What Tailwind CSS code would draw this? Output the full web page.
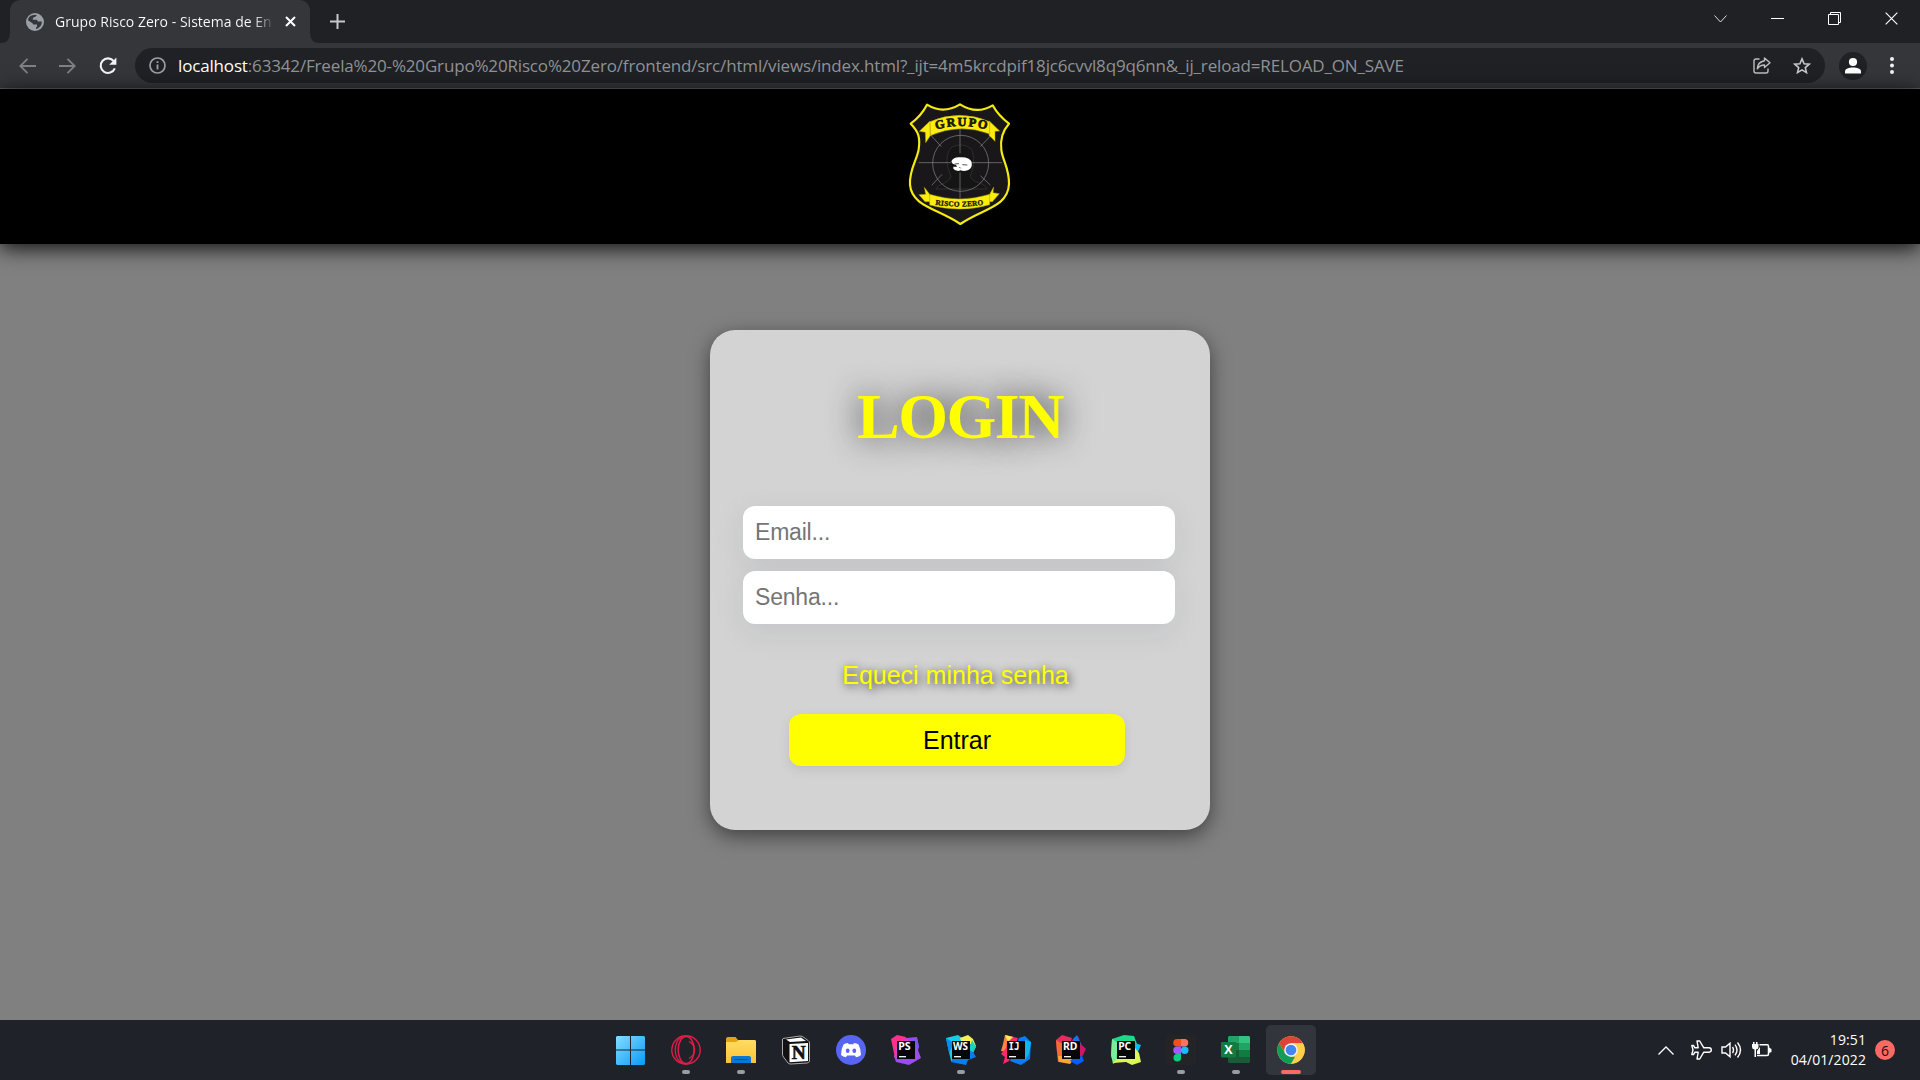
<!DOCTYPE html>
<html lang="pt-BR">
<head>
<meta charset="utf-8">
<title>Grupo Risco Zero</title>
<script src="https://cdn.jsdelivr.net/npm/@tailwindcss/browser@4"></script>
</head>
<body class="w-[1920px] h-[1080px] overflow-hidden flex flex-col bg-[#808080] font-['Open_Sans',sans-serif]">

<!-- Browser tab strip -->
<div class="h-[43px] shrink-0 bg-[#202124] flex items-start">
  <svg class="w-[10px] h-[43px] shrink-0" viewBox="0 0 10 43"><path d="M0 43Q10 43 10 33V43Z" fill="#35363a"/></svg>
  <div class="w-[300px] h-[43px] rounded-t-[10px] bg-[#35363a] flex items-center pl-4">
    <svg class="w-[18px] h-[18px] shrink-0" viewBox="0 0 18 18"><circle cx="9" cy="9" r="9" fill="#9aa0a6"/><path d="M2 7.2C2 4.500 4 2.600 6.500 2.200L9 1.800 11 2.500C10 3.200 9.500 4 8 4.300 7 4.600 7.300 5.800 6.500 6.500H10.500C11.500 6.500 11 8 12 8.500H15.800C16 12 13.500 15 10.500 15.900 9.500 15.400 10 14.300 11 13.500V11.500H7.200C5.800 11.200 6 9.500 4.500 9.300Z" fill="#35363a"/><path d="M2.500 8L6.500 10.200 8 13.500 7.500 16 4.500 14.500Z M8 4.500L12 3.500 13.800 4.800 12 7 10.500 6.500H7Z" fill="#9aa0a6"/></svg>
    <div class="w-[220px] ml-[11px] overflow-hidden whitespace-nowrap text-[14px] leading-5 tracking-[0.02px] text-white bg-gradient-to-r from-white from-90% to-transparent bg-clip-text [-webkit-text-fill-color:transparent]">Grupo Risco Zero - Sistema de En</div>
    <svg class="w-[11px] h-[11px] ml-[10px] shrink-0" viewBox="0 0 11 11" fill="none" stroke="#fff" stroke-width="2"><path d="M1 1L10 10M10 1L1 10"/></svg>
  </div>
  <svg class="w-[10px] h-[43px] shrink-0" viewBox="0 0 10 43"><path d="M10 43Q0 43 0 33V43Z" fill="#35363a"/></svg>
  <svg class="w-[15px] h-[15px] mt-[14px] ml-[10px]" viewBox="0 0 15 15" stroke="#c6c8cb" stroke-width="2"><path d="M7.500 0V15M0 7.500H15"/></svg>
  <div class="ml-auto flex items-center h-[37px] pr-[22px] gap-[44px]">
    <svg class="w-[13px] h-[8px]" viewBox="0 0 13 8" fill="none" stroke="#ddd"><path d="M.5 .5L6.500 7 12.500 .5"/></svg>
    <svg class="w-[13px] h-[13px]" viewBox="0 0 13 13" stroke="#fff"><path d="M0 6.500H13"/></svg>
    <svg class="w-[13px] h-[13px]" viewBox="0 0 13 13" fill="none" stroke="#fff"><path d="M.5 2.500H10.500V12.500H.5ZM2.500 2.500V.5H12.500V10.500H10.500"/></svg>
    <svg class="w-[13px] h-[13px]" viewBox="0 0 14 14" stroke="#fff" stroke-width="1.200"><path d="M.7 .7L13.300 13.300M13.300 .7L.7 13.300"/></svg>
  </div>
</div>

<!-- Address toolbar -->
<div class="h-[46px] shrink-0 bg-[#35363a] border-b border-[#5c5d60] flex items-center pl-[19px] pr-[26px]">
  <svg class="w-[17px] h-[16px]" viewBox="0 0 17 16" fill="none" stroke="#808184" stroke-width="1.800"><path d="M17 8H1.500M8.500 .8L1.300 8 8.500 15.200"/></svg>
  <svg class="w-[17px] h-[16px] ml-[23px]" viewBox="0 0 17 16" fill="none" stroke="#808184" stroke-width="1.800"><path d="M0 8H15.500M8.500 .8L15.700 8 8.500 15.200"/></svg>
  <svg class="w-[18px] h-[18px] ml-[23px]" viewBox="0 0 18 18"><path d="M14.800 4.200A7.300 7.300 0 1 0 15.800 11.300" fill="none" stroke="#f1f3f4" stroke-width="2.100"/><path d="M17.400 .5V7.700H10.200Z" fill="#f1f3f4"/></svg>
  <div class="w-[1690px] h-[35px] ml-[18px] rounded-full bg-[#202124] flex items-center pl-[14px] pr-[14px]">
    <svg class="w-[17px] h-[17px] shrink-0" viewBox="0 0 17 17"><circle cx="8.500" cy="8.500" r="7.500" fill="none" stroke="#9aa0a6" stroke-width="1.700"/><path d="M8.500 7.500V12.500M8.500 4.300V6.100" stroke="#9aa0a6" stroke-width="1.800"/></svg>
    <div class="ml-[12px] whitespace-nowrap text-[17px] leading-6 tracking-[-0.16px] text-[#909396]"><span class="text-white">localhost</span>:63342/Freela%20-%20Grupo%20Risco%20Zero/frontend/src/html/views/index.html?_ijt=4m5krcdpif18jc6cvvl8q9q6nn&amp;_ij_reload=RELOAD_ON_SAVE</div>
    <svg class="w-[18px] h-[17px] ml-auto" viewBox="0 0 18 17" fill="none" stroke="#bdbfc1" stroke-width="1.400"><path d="M6.500 2H3Q1 2 1 4V14Q1 16 3 16H13Q15 16 15 14V11.500"/><path d="M11.500 1L17 5.800 11.500 10.500V8C8 8 6 9.200 4.300 11.800 4.500 7 7.500 4.500 11.500 3.800Z" stroke-linejoin="round"/></svg>
    <svg class="w-[18px] h-[17px] ml-[22px]" viewBox="0 0 18 17" fill="none" stroke="#c6c8cb" stroke-width="1.600"><path d="M9 1.900L11.100 6.700 16.200 7.200 12.300 10.600 13.500 15.600 9 12.900 4.500 15.600 5.700 10.600 1.800 7.200 6.900 6.700Z"/></svg>
  </div>
  <svg class="w-[28px] h-[28px] ml-auto" viewBox="0 0 28 28"><circle cx="14" cy="14" r="14" fill="#202124"/><circle cx="14" cy="10" r="4.100" fill="#fff"/><path d="M6 21.500V19.500C6 16.500 10 15.500 14 15.500S22 16.500 22 19.500V21.500Z" fill="#fff"/></svg>
  <svg class="w-[4px] h-[17px] ml-[23px]" viewBox="0 0 4 17" fill="#f1f3f4"><circle cx="2" cy="2" r="2"/><circle cx="2" cy="8.500" r="2"/><circle cx="2" cy="15" r="2"/></svg>
</div>

<!-- Page header -->
<header class="h-[155px] shrink-0 bg-black flex justify-center items-start pt-[11px] shadow-[0_4px_20px_rgba(0,0,0,0.9)]">
  <svg class="w-[110px] h-[127px]" viewBox="45 30 330 381">
    <defs>
      <path id="arc-top" d="M138 119Q214 97 294 119"/>
      <path id="arc-bottom" d="M136 344Q210 355 284 344"/>
    </defs>
    <path d="M111 44Q159 74 210 43Q260 75 308 46Q325 77 357 101Q328 133 334 180C338 212 358 235 357 282C354 352 277 356 211 402C145 356 65 350 60 284C57 239 81 210 86 178C91 143 86 125 62 101Q94 77 111 44Z" fill="#191719" stroke="#f5eb13" stroke-width="6.500" stroke-linejoin="round"/>
    <path d="M183 260C170 228 168 208 175 188C180 157 243 158 248 188C254 219 250 231 241 259C247 280 283 276 291 297H138C148 278 173 283 183 260Z" fill="#151515" stroke="#343234" stroke-width="2.500"/>
    <g fill="none" stroke="#8b898b" stroke-width="2"><circle cx="212" cy="220" r="84"/><path d="M210 112V190M210 247V326M86 218H184M246 218H336M122 135L154 170M302 137L271 170M125 286L156 253M301 285L271 257"/></g>
    <path d="M184 214Q191 200 211 202Q239 201 245 216Q248 235 235 240Q221 246 212 241L205 243 196 241 190 236 190 230 201 230 198 225 188 221Z" fill="#fff"/>
    <path d="M194 222L207 221M217 224L232 225M208 231L212 235" stroke="#333" stroke-width="2.500" fill="none"/>
    <g fill="#fced0c" stroke="#a99f0b" stroke-width="1.500"><path d="M120 93L121 137 107 158 106 127 88 124ZM298 93L297 136 315 154 315 124 329 123Z"/><path d="M120 95Q208 57 299 95V132Q209 98 121 137Z"/><path d="M119 313L103 292 107 313 87 314 105 335H126ZM299 313L311 291 309 308 328 311 307 335H287Z"/><path d="M119 313Q208 341 299 313V344Q209 370 119 345Z"/></g>
    <text class="font-['Liberation_Serif',serif] font-bold" font-size="37" fill="#171500" stroke="#171500" stroke-width="2"><textPath href="#arc-top" textLength="154">GRUPO</textPath></text>
    <text class="font-['Liberation_Serif',serif] font-bold" font-size="22" fill="#171500" stroke="#171500"><textPath href="#arc-bottom" textLength="145">RISCO ZERO</textPath></text>
  </svg>
</header>

<!-- Login -->
<main class="flex-1 flex justify-center items-start pt-[86px]">
  <section class="w-[500px] h-[500px] rounded-[25px] bg-[#d3d3d3] shadow-[0_6px_20px_rgba(0,0,0,0.5)] flex flex-col font-['Liberation_Sans',sans-serif]">
    <h1 class="mt-[50px] h-[74px] text-center font-['Liberation_Serif',serif] font-bold text-[64px] leading-[74px] tracking-[-1.5px] text-[#ffff00] [text-shadow:0_0_32px_rgba(0,0,0,0.85)]">LOGIN</h1>
    <form class="mt-[52px] ml-[33px] w-[432px] flex flex-col gap-[12px]">
      <input type="text" placeholder="Email..." class="h-[53px] rounded-[12px] bg-white px-3 text-[23px] tracking-[-0.2px] placeholder:text-[#757575] shadow-[0_8px_32px_rgba(31,38,60,0.08)]">
      <input type="text" placeholder="Senha..." class="h-[53px] rounded-[12px] bg-white px-3 text-[23px] tracking-[-0.2px] placeholder:text-[#757575] shadow-[0_8px_32px_rgba(31,38,60,0.08)]">
    </form>
    <a class="mt-[36px] h-[30px] pr-[9px] text-center text-[25px] leading-[30px] text-[#ffff00] [text-shadow:2px_2px_10px_rgba(0,0,0,0.8)]">Equeci minha senha</a>
    <button class="mt-[24px] ml-[79px] w-[336px] h-[52px] pt-[2px] rounded-[12px] bg-[#ffff00] text-black text-[25px] shadow-[0_4px_12px_rgba(0,0,0,0.09)]">Entrar</button>
  </section>
</main>

<!-- Taskbar -->
<footer class="h-[60px] shrink-0 bg-[#1f2329] flex">
  <div class="w-[603.5px]"></div>
  <nav class="grid grid-cols-13 w-[715px] h-[60px]">
    <div class="flex flex-col items-center pt-[15px] gap-[5px]"><svg class="w-[30px] h-[30px]" viewBox="0 0 30 30"><defs><linearGradient id="win" x1="0" y1="0" x2="30" y2="30" gradientUnits="userSpaceOnUse"><stop stop-color="#86dfff"/><stop offset="1" stop-color="#0798f8"/></linearGradient></defs><path d="M1 1H14V14.400H0V2ZM15 1H28L29 2V14.400H15ZM0 15.500H14V30H1L0 29ZM15 15.500H29V29L28 30H15Z" fill="url(#win)"/></svg></div>
    <div class="flex flex-col items-center pt-[15px] gap-[5px]"><svg class="w-[30px] h-[30px]" viewBox="0 0 30 30" fill="none" stroke="#e21c48"><circle cx="15" cy="15" r="14.200" stroke-width="1.400"/><ellipse cx="15.200" cy="15" rx="8" ry="13.500" stroke-width="1.500"/><path d="M11 2C2 7 2 23 11 28M18 6.500C25 10 25 20 18 23.500" stroke-width="1.300"/></svg><i class="w-[8px] h-[4px] rounded-full bg-[#9a9ca0]"></i></div>
    <div class="flex flex-col items-center pt-[15px] gap-[5px]"><svg class="w-[30px] h-[30px]" viewBox="0 0 30 30"><defs><linearGradient id="fol" x1="0" y1="0" x2="0" y2="1"><stop stop-color="#ffdc63"/><stop offset="1" stop-color="#fdc332"/></linearGradient></defs><path d="M0 4Q0 2 2 2H9.500L12 5H28Q30 5 30 7V14H0Z" fill="#e5a313"/><path d="M0 7H10L13 5H28.500Q30 5 30 6.500V28H0Z" fill="url(#fol)"/><path d="M5 28V23Q5 21 7 21H23Q25 21 25 23V28Z" fill="#0878d2"/><path d="M9 24.500H21" stroke="#074f91" stroke-linecap="round"/></svg><i class="w-[8px] h-[4px] rounded-full bg-[#9a9ca0]"></i></div>
    <div class="flex flex-col items-center pt-[15px] gap-[5px]"><svg class="w-[30px] h-[30px]" viewBox="0 0 30 30"><path d="M2 3.500L19 1Q21 1 23 2.500L27 5.500Q28.500 6.500 28.500 8V26Q28 28 26 28L10 29Q8 29 7 28L2.500 22Q1.500 20.500 1.500 19V4Z" fill="#111" stroke="#aaa"/><path d="M5 4.500L20 2.500 25 6 9 7Z" fill="#fff"/><path d="M8.500 9L27 8V26L8.500 27.300Z" fill="#fff"/><text x="10.800" y="24" class="font-['Liberation_Serif',serif] font-bold" font-size="18.500" fill="#111" stroke="#111" stroke-width=".6" textLength="14" lengthAdjust="spacingAndGlyphs">N</text></svg></div>
    <div class="flex flex-col items-center pt-[15px] gap-[5px]"><svg class="w-[30px] h-[30px]" viewBox="0 0 30 30"><circle cx="15" cy="15" r="15" fill="#5865f2"/><path d="M12 8Q9 8.300 7.500 9.500Q5 14 5 20Q7 22 10 22.200L11 20.500H19L20 22.200Q23 22 25 20Q25 14 22.500 9.500Q21 8.300 18 8L17.300 9.300H12.700Z" fill="#fff"/><ellipse cx="11.700" cy="15.800" rx="1.900" ry="2.200" fill="#5865f2"/><ellipse cx="18.300" cy="15.800" rx="1.900" ry="2.200" fill="#5865f2"/></svg></div>
    <div class="flex flex-col items-center pt-[15px] gap-[5px]"><svg class="w-[30px] h-[30px]" viewBox="0 0 30 30"><path d="M0 4L6 0 15 2 12 20 4 23Z" fill="#ff318c"/><path d="M15 3L26 2 28 12 27 15 30 23 18 30 5 27 3 21 13 8Z" fill="#9b4bee"/><path d="M15 3L20 6 8 24 3 22 6 11Z" fill="#d63fc4"/><path d="M20 6L26 3 28 12 22 16Z" fill="#7656f5"/><rect x="6" y="6" width="18" height="18" fill="#08050c"/><text x="7.200" y="15" class="font-['Noto_Sans',sans-serif] font-bold" font-size="10" fill="#fff" textLength="12.500" lengthAdjust="spacingAndGlyphs">PS</text><path d="M8 21.700H15" stroke="#fff" stroke-width="1.300"/></svg></div>
    <div class="flex flex-col items-center pt-[15px] gap-[5px]"><svg class="w-[30px] h-[30px]" viewBox="0 0 30 30"><path d="M0 3L12 0 20 6 9 27 5 26Z" fill="#14cfe5"/><path d="M14 3L22 0 27 4 30 11 27 18 20 18Z" fill="#f4f05a"/><path d="M24 9L30 11 27 17 30 22 22 25 20 30 5 27 8 20Z" fill="#087cf3"/><path d="M26 5L30 12 27 17 23 15Z" fill="#14d5bc"/><path d="M0 3L8 8 3 18Z" fill="#078cf1"/><rect x="6" y="6" width="18" height="18" fill="#05080a"/><text x="7" y="15" class="font-['Noto_Sans',sans-serif] font-bold" font-size="10" fill="#fff" textLength="15" lengthAdjust="spacingAndGlyphs">WS</text><path d="M8 21.700H15" stroke="#fff" stroke-width="1.300"/></svg><i class="w-[8px] h-[4px] rounded-full bg-[#9a9ca0]"></i></div>
    <div class="flex flex-col items-center pt-[15px] gap-[5px]"><svg class="w-[30px] h-[30px]" viewBox="0 0 30 30"><path d="M4 0L13 2 9 18 0 16 2 9Z" fill="#ff873b"/><path d="M7 1L17 3 8 26 2 29 4 22 0 19 5 13Z" fill="#ff286c"/><path d="M18 3L24 1 30 7 29 24 20 30 9 26Z" fill="#087df5"/><path d="M24 5L30 7 28 19 24 25Z" fill="#12b5eb"/><path d="M4 0L12 2 7 7Z" fill="#f9ed60"/><rect x="6" y="6" width="18" height="18" fill="#090507"/><text x="7.500" y="15" class="font-['DejaVu_Sans_Mono',monospace] font-bold" font-size="9.600" fill="#fff" textLength="11" lengthAdjust="spacingAndGlyphs">IJ</text><path d="M8 21.700H15" stroke="#fff" stroke-width="1.300"/></svg></div>
    <div class="flex flex-col items-center pt-[15px] gap-[5px]"><svg class="w-[30px] h-[30px]" viewBox="0 0 30 30"><path d="M0 5L6 0 16 3 10 20 1 18Z" fill="#e52b60"/><path d="M0 5L7 9 8 25 2 27 1 17Z" fill="#f66b32"/><path d="M16 5L22 1 25 9 30 14 26 22 20 19Z" fill="#ca1767"/><path d="M17 4L21 0 25 9 20 11Z" fill="#0879f4"/><path d="M2 21L9 21 18 24 14 29 3 27Z" fill="#ffa436"/><path d="M17 23L26 21 28 26 21 30 14 26Z" fill="#075eff"/><rect x="6" y="6" width="18" height="18" fill="#090507"/><text x="7" y="15" class="font-['Noto_Sans',sans-serif] font-bold" font-size="10" fill="#fff" textLength="14.500" lengthAdjust="spacingAndGlyphs">RD</text><path d="M8 21.700H15" stroke="#fff" stroke-width="1.300"/></svg></div>
    <div class="flex flex-col items-center pt-[15px] gap-[5px]"><svg class="w-[30px] h-[30px]" viewBox="0 0 30 30"><path d="M1 4L13 0 23 1 26 9 10 25 3 28 0 21Z" fill="#21d789"/><path d="M1 4L7 8 5 27 2 29 0 20Z" fill="#78f099"/><path d="M24 8L30 10 27 17 22 17Z" fill="#08bdf0"/><path d="M24 13L28 18 30 27 21 30 15 27 2 28 9 20Z" fill="#dcf657"/><rect x="6" y="6" width="18" height="18" fill="#050905"/><text x="7.200" y="15" class="font-['Noto_Sans',sans-serif] font-bold" font-size="10" fill="#fff" textLength="13" lengthAdjust="spacingAndGlyphs">PC</text><path d="M8 21.700H15" stroke="#fff" stroke-width="1.300"/></svg></div>
    <div class="flex flex-col items-center pt-[15px] gap-[5px]"><svg class="w-[30px] h-[30px]" viewBox="0 0 30 30"><rect width="30" height="30" fill="#242426"/><path d="M15 4H11A3.750 3.750 0 0 0 11 11.500H15Z" fill="#f24e1e"/><path d="M15 4H18.500A3.750 3.750 0 0 1 18.500 11.500H15Z" fill="#ff7262"/><path d="M15 11.500H11A3.750 3.750 0 0 0 11 19H15Z" fill="#a259ff"/><circle cx="18.700" cy="15.250" r="3.750" fill="#1abcfe"/><path d="M15 19H11.200A3.750 3.750 0 1 0 15 22.700Z" fill="#0acf83"/></svg><i class="w-[8px] h-[4px] rounded-full bg-[#9a9ca0]"></i></div>
    <div class="flex flex-col items-center pt-[15px] gap-[5px]"><svg class="w-[30px] h-[30px]" viewBox="0 0 30 30"><path d="M8 1H18V8H7V2Z" fill="#21a366"/><path d="M18 1H28L29 2V8H18Z" fill="#33c481"/><path d="M7 8H18V15H7Z" fill="#107c41"/><path d="M18 8H29V15H18Z" fill="#21a366"/><path d="M7 15H18V22H7Z" fill="#185c37"/><path d="M18 15H29V22H18Z" fill="#107c41"/><path d="M7 22H29V27L28 28H8L7 27Z" fill="#185c37"/><rect y="7" width="15" height="15.500" rx="1" fill="#107c41"/><text x="7.500" y="19" text-anchor="middle" class="font-['Open_Sans',sans-serif] font-bold" font-size="12.500" fill="#fff">X</text></svg><i class="w-[8px] h-[4px] rounded-full bg-[#9a9ca0]"></i></div>
    <div class="w-[50px] h-[50px] mt-[5px] ml-[2.5px] rounded-[5px] bg-[#32353b] flex flex-col items-center pt-[10px] gap-[5px]"><svg class="w-[30px] h-[30px]" viewBox="0 0 30 30"><circle cx="15" cy="15" r="13.700" fill="#ffcf48"/><path d="M3.130 8.150A13.700 13.700 0 0 1 26.870 8.150H15L9.070 18.430Z" fill="#db4437"/><path d="M3.130 8.150L9.070 18.430 15 21.850H20.930L15 28.700A13.700 13.700 0 0 1 3.130 8.150Z" fill="#0f9d58"/><path d="M20.930 18.430L15 28.700A13.700 13.700 0 0 0 26.870 8.150H15Z" fill="#ffcf48"/><circle cx="15" cy="15" r="6.850" fill="#f1f1f1"/><circle cx="15" cy="15" r="5.300" fill="#4285f4"/></svg><i class="w-[20px] h-[4px] rounded-full bg-[#fa6a65]"></i></div>
  </nav>
  <div class="flex-1 flex items-center pr-[25px] justify-end text-white">
    <svg class="w-[16px] h-[9px]" viewBox="0 0 16 9" fill="none" stroke="#fff" stroke-width="1.300"><path d="M.5 8.500L8 1 15.500 8.500"/></svg>
    <svg class="w-[21px] h-[20px] ml-[17px]" viewBox="0 0 21 20" fill="none" stroke="#fff" stroke-width="1.400" stroke-linejoin="round"><path d="M7.200 7.800L6 1H8.700L12.800 7.800H18Q20.300 8 20.300 10T18 12.200H12.800L8.700 19H6L7.200 12.200H4L2.500 14.500H.8L2 10 .8 5.500H2.500L4 7.800Z"/></svg>
    <svg class="w-[21px] h-[18px] ml-[9px]" viewBox="0 0 21 18" fill="none" stroke="#fff" stroke-width="1.400"><path d="M1 6H4.500L9 2.300V15.700L4.500 12H1ZM11.500 6Q13.500 9 11.500 12M14 3.700Q18 9 14 14.300M16.500 1.500Q22.500 9 16.500 16.500"/></svg>
    <svg class="w-[21px] h-[18px] ml-[9px]" viewBox="0 0 21 18"><path d="M8.500 3.700H16Q17.500 3.700 17.500 5.200V13Q17.500 14.500 16 14.500H6" fill="none" stroke="#fff" stroke-width="1.500"/><path d="M1 3H2V1H3.500V3H5V1H6.500V3H7.500V6Q7.500 8 5 8.500V16H3.500V8.500Q1 8 1 6ZM6 10L9 6V13H6ZM18 6.500L20.500 8V11L18 12Z" fill="#fff"/></svg>
    <div class="ml-[19px] text-right text-[14px] leading-5 tracking-[0.1px]"><div>19:51</div><div>04/01/2022</div></div>
    <div class="ml-[9px] w-[20px] h-[20px] rounded-full bg-[#fa6a65] text-[#111] text-[14px] flex items-center justify-center pt-px">6</div>
  </div>
</footer>
</body>
</html>
